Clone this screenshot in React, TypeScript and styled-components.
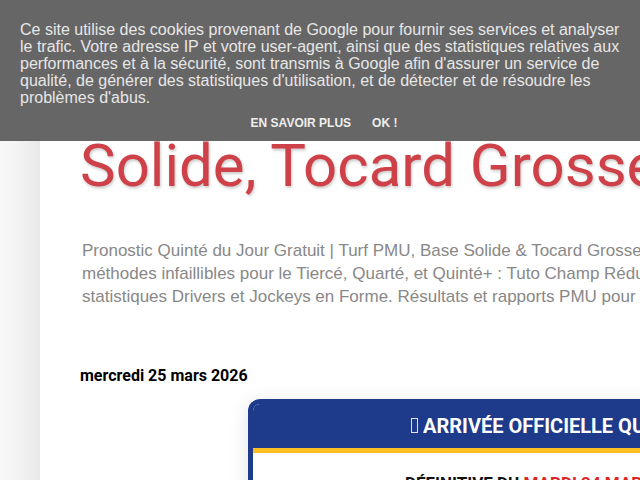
import styled, { createGlobalStyle } from "styled-components"

const GlobalStyle = createGlobalStyle`
    html, body {
        margin: 0;
        padding: 0;
        background: #f7f7f7;
        font-family: "Liberation Sans", Arial, sans-serif;
        overflow: hidden;
    }
`

const Page = styled.div`
    width: 640px;
    height: 480px;
    overflow: hidden;
    position: relative;
`

const Column = styled.main`
    margin-left: 40px;
    width: 900px;
    min-height: 480px;
    padding-top: 58px;
    background: #ffffff;
    box-shadow: 0 0 40px rgba(0, 0, 0, 0.12);
`

const BlogHeader = styled.header`
    padding-left: 40px;
`

const BlogTitle = styled.h1`
    margin: 0;
    font-family: Roboto, "Liberation Sans", sans-serif;
    font-size: 60px;
    font-weight: 400;
    line-height: 72px;
    color: #cf4148;
    text-shadow: 1px 2px 3px rgba(0, 0, 0, 0.2);
    white-space: nowrap;
`

const Description = styled.p`
    margin: 37px 0 0 2px;
    font-size: 17px;
    line-height: 23px;
    color: #888888;
    white-space: nowrap;
`

const DateHeader = styled.h2`
    margin: 59px 0 0 40px;
    font-family: Roboto, "Liberation Sans", sans-serif;
    font-size: 16px;
    font-weight: 700;
    line-height: 18px;
    color: #000000;
`

const Card = styled.section`
    margin: 14px 0 0 208px;
    width: 700px;
    border: 5px solid #1e3a8a;
    border-bottom: none;
    border-radius: 12px 12px 0 0;
    background: #ffffff;
    box-shadow: 0 4px 20px rgba(0, 0, 0, 0.12);
    overflow: hidden;
    font-family: Roboto, "Liberation Sans", sans-serif;
`

const CardHeader = styled.div`
    display: flex;
    align-items: center;
    gap: 5px;
    background: #1e3a8a;
    color: #ffffff;
    font-size: 20px;
    font-weight: 700;
    height: 44px;
    line-height: 44px;
    padding-left: 158px;
    border-bottom: 5px solid #fbbf24;
    white-space: nowrap;
`

const Tofu = styled.span`
    display: inline-block;
    width: 5px;
    height: 13px;
    margin-top: -2px;
    border: 1px solid rgba(255, 255, 255, 0.85);
`

const CardBody = styled.div`
    padding: 20px 0 0 152px;
    font-size: 17px;
    font-weight: 700;
    color: #111111;
    white-space: nowrap;
`

const Red = styled.span`
    color: #dc2626;
`

const CookieBar = styled.div`
    position: absolute;
    top: 0;
    left: 0;
    right: 0;
    height: 141px;
    box-sizing: border-box;
    padding: 21px 20px 0;
    background: #666666;
    color: #e6e6e6;
    z-index: 10;
`

const CookieText = styled.p`
    margin: 0;
    font-size: 16px;
    line-height: 17px;
`

const CookieButtons = styled.div`
    display: flex;
    justify-content: center;
    gap: 21px;
    margin-top: 10px;
    padding-left: 8px;
`

const CookieButton = styled.a`
    font-size: 12px;
    font-weight: 700;
    color: #eeeeee;
    text-transform: uppercase;
    text-decoration: none;
    cursor: pointer;
`

export default function App() {
    return (
        <>
            <GlobalStyle />
            <Page>
                <Column>
                    <BlogHeader>
                        <BlogTitle>
                            Pronostic Quinté : Base
                            <br />
                            Solide, Tocard Grosse Cote
                        </BlogTitle>
                        <Description>
                            Pronostic Quinté du Jour Gratuit | Turf PMU, Base Solide &amp; Tocard Grosse Cote.
                            <br />
                            méthodes infaillibles pour le Tiercé, Quarté, et Quinté+ : Tuto Champ Réduit,
                            <br />
                            statistiques Drivers et Jockeys en Forme. Résultats et rapports PMU pour la course.
                        </Description>
                    </BlogHeader>
                    <DateHeader>mercredi 25 mars 2026</DateHeader>
                    <Card>
                        <CardHeader>
                            <Tofu aria-hidden="true" />
                            ARRIVÉE OFFICIELLE QUINTÉ+
                        </CardHeader>
                        <CardBody>
                            DÉFINITIVE DU <Red>MARDI 24 MARS 2026</Red>
                        </CardBody>
                    </Card>
                </Column>
                <CookieBar>
                    <CookieText>
                        Ce site utilise des cookies provenant de Google pour fournir ses services et analyser
                        le trafic. Votre adresse IP et votre user-agent, ainsi que des statistiques relatives aux
                        performances et à la sécurité, sont transmis à Google afin d'assurer un service de
                        qualité, de générer des statistiques d'utilisation, et de détecter et de résoudre les
                        problèmes d'abus.
                    </CookieText>
                    <CookieButtons>
                        <CookieButton>En savoir plus</CookieButton>
                        <CookieButton>OK !</CookieButton>
                    </CookieButtons>
                </CookieBar>
            </Page>
        </>
    )
}
